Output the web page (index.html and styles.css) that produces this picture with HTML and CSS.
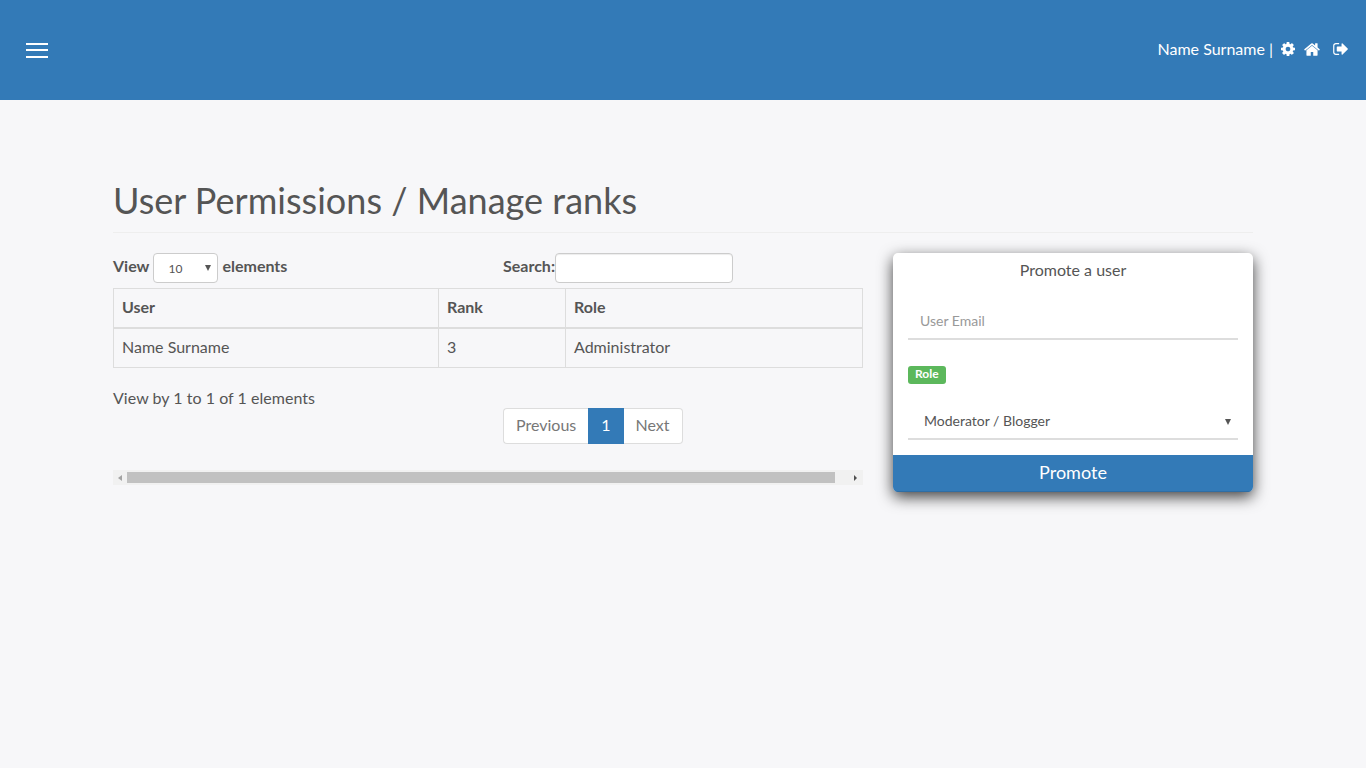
FILE: index.html
```html
<!DOCTYPE html>
<html lang="en">
<head>
<meta charset="utf-8">
<title>Manage ranks</title>
<link rel="stylesheet" href="styles.css">
</head>
<body>
<header class="topbar">
  <button class="burger" type="button" aria-label="Menu"><span></span><span></span><span></span></button>
  <div class="usernav">
    <span class="username">Name Surname |</span>
    <svg class="ico ico-cog" viewBox="0 0 1536 1536"><path transform="translate(-128 -128)" d="M1152 896q0-106-75-181t-181-75-181 75-75 181 75 181 181 75 181-75 75-181zm512-109v222q0 12-8 23t-20 13l-185 28q-19 54-39 91 35 50 107 138 10 12 10 25t-9 23q-27 37-99 108t-94 71q-12 0-26-9l-138-108q-44 23-91 38-16 136-29 186-7 28-36 28h-222q-14 0-24.500-8.500t-11.500-21.500l-28-184q-49-16-90-37l-141 107q-10 9-25 9-14 0-25-11-126-114-165-168-7-10-7-23 0-12 8-23 15-21 51-66.500t54-70.500q-27-50-41-99l-183-27q-13-2-21-12.500t-8-23.500v-222q0-12 8-23t19-13l186-28q14-46 39-92-40-57-107-138-10-12-10-24 0-10 9-23 26-36 98.500-107.500t94.500-71.500q13 0 26 10l138 107q44-23 91-38 16-136 29-186 7-28 36-28h222q14 0 24.500 8.500t11.500 21.500l28 184q49 16 90 37l142-107q9-9 24-9 13 0 25 10 129 119 165 170 7 8 7 22 0 12-8 23-15 21-51 66.500t-54 70.500q26 50 41 98l183 28q13 2 21 12.500t8 23.500z"/></svg>
    <svg class="ico ico-home" viewBox="96 224 1600 1344"><path d="M1472 992v480q0 26-19 45t-45 19h-384v-384h-256v384h-384q-26 0-45-19t-19-45v-480q0-1 .5-3t.5-3l575-474 575 474q1 2 1 6zm223-69l-62 74q-8 9-21 11h-3q-13 0-21-7l-692-577-692 577q-12 8-24 7-13-2-21-11l-62-74q-8-10-7-23.500t11-21.500l719-599q32-26 76-26t76 26l244 204v-195q0-14 9-23t23-9h192q14 0 23 9t9 23v408l219 182q10 8 11 21.500t-7 23.500z"/></svg>
    <svg class="ico ico-out" viewBox="64 256 1568 1280"><path d="M704 1440q0 4 1 20t.5 26.500-3 23.500-10 19.500-20.500 6.500h-320q-119 0-203.500-84.500t-84.500-203.500v-704q0-119 84.500-203.500t203.500-84.500h320q13 0 22.500 9.500t9.500 22.500q0 4 1 20t.5 26.500-3 23.500-10 19.500-20.500 6.500h-320q-66 0-113 47t-47 113v704q0 66 47 113t113 47h312l11.500 1 11.500 3 8 5.500 7 9 2 13.500zm928-544q0 26-19 45l-544 544q-19 19-45 19t-45-19-19-45v-288h-448q-26 0-45-19t-19-45v-384q0-26 19-45t45-19h448v-288q0-26 19-45t45-19 45 19l544 544q19 19 19 45z"/></svg>
  </div>
</header>

<main class="page">
  <h1 class="title">User Permissions / Manage ranks</h1>
  <div class="columns">
    <section class="listing">
      <div class="controls">
        <label class="control-view"><span>View</span>
          <span class="select-wrap len-wrap"><select class="len-select"><option>10</option></select></span>
          <span>elements</span></label>
        <label class="control-search">Search:<input class="search" type="text"></label>
      </div>
      <table class="grid">
        <thead>
          <tr><th class="c-user">User</th><th class="c-rank">Rank</th><th>Role</th></tr>
        </thead>
        <tbody>
          <tr><td>Name Surname</td><td>3</td><td>Administrator</td></tr>
        </tbody>
      </table>
      <div class="info">View by 1 to 1 of 1 elements</div>
      <nav class="pager">
        <a class="pg pg-first">Previous</a><a class="pg pg-on">1</a><a class="pg pg-last">Next</a>
      </nav>
      <div class="hscroll">
        <span class="arrow arrow-l"></span>
        <span class="thumb"></span>
        <span class="arrow arrow-r"></span>
      </div>
    </section>

    <aside class="card">
      <h2 class="card-title">Promote a user</h2>
      <div class="card-body">
        <input class="line-input" type="text" placeholder="User Email">
        <span class="badge">Role</span>
        <span class="select-wrap line-wrap"><select class="line-select"><option>Moderator / Blogger</option></select></span>
      </div>
      <button class="promote" type="button">Promote</button>
    </aside>
  </div>
</main>
</body>
</html>
```

FILE: styles.css
```css
* { box-sizing: border-box; }

html, body { margin: 0; height: 100%; }

body {
  background: #f7f7f9;
  color: #555;
  font-family: Lato, "Liberation Sans", sans-serif;
  font-size: 16px;
  line-height: 1.42857;
}

.topbar {
  height: 100px;
  background: #337ab7;
  color: #fff;
  display: flex;
  align-items: center;
  justify-content: space-between;
  padding: 0 18px 0 26px;
}

.burger {
  width: 22px;
  height: 15px;
  padding: 0;
  border: 0;
  background: none;
  display: flex;
  flex-direction: column;
  justify-content: space-between;
}

.burger span { display: block; height: 2px; background: #fff; }

.usernav { display: flex; align-items: center; margin-top: -2px; }

.username { margin-right: 8px; }

.ico { fill: #fff; display: block; }
.ico-cog { width: 14px; height: 14px; margin-right: 9px; }
.ico-home { width: 16px; height: 13px; margin-right: 13px; }
.ico-out { width: 15px; height: 12px; }

.page { width: 1140px; margin: 0 auto; padding-top: 78px; }

.title {
  margin: 0 0 20px;
  padding-bottom: 10px;
  border-bottom: 1px solid #eee;
  font-size: 36px;
  font-weight: 400;
  line-height: 44px;
  letter-spacing: .02px;
}

.columns { display: flex; justify-content: space-between; align-items: flex-start; }

.listing { width: 750px; }

.controls { display: flex; height: 35px; font-weight: 700; }

.control-view { width: 390px; display: flex; align-items: flex-start; gap: 4px; line-height: 26px; }

.control-search { display: flex; align-items: flex-start; line-height: 26px; }

.select-wrap { position: relative; display: block; }

.select-wrap::after {
  content: "";
  position: absolute;
  top: 50%;
  border-left: 3px solid transparent;
  border-right: 3px solid transparent;
  border-top: 6px solid #555;
  pointer-events: none;
}

.len-wrap { width: 65px; height: 30px; }
.len-wrap::after { right: 7px; margin-top: -3px; }

.line-wrap { width: 100%; margin-top: 16px; }
.line-wrap::after { right: 7px; margin-top: -1px; }

.len-select {
  display: block;
  width: 65px;
  height: 30px;
  padding: 0 0 0 14px;
  border: 1px solid #ccc;
  border-radius: 4px;
  background-color: #fff;
  color: #555;
  font-family: Lato, sans-serif;
  font-size: 12px;
  appearance: none;
}

.search {
  width: 178px;
  height: 30px;
  padding: 0 8px;
  border: 1px solid #ccc;
  border-radius: 4px;
  background: #fff;
  box-shadow: inset 0 1px 1px rgba(0, 0, 0, .075);
}

.grid { width: 750px; border-collapse: collapse; table-layout: fixed; }

.grid th, .grid td {
  border: 1px solid #ddd;
  padding: 0 8px;
  text-align: left;
  line-height: 22px;
}

.grid td { height: 40px; padding-bottom: 2px; }
.grid th { border-bottom-width: 2px; height: 39px; padding-bottom: 1px; }

.c-user { width: 325px; }
.c-rank { width: 127px; }

.info { margin-top: 19px; height: 21px; line-height: 22px; letter-spacing: .03px; }

.pager { display: flex; margin: 0 0 26px 390px; height: 36px; }

.pg {
  display: block;
  height: 36px;
  padding: 0 12px;
  border: 1px solid #ddd;
  background: #fff;
  color: #777;
  line-height: 32px;
}

.pg-first { border-radius: 4px 0 0 4px; border-right: 0; }
.pg-last { border-radius: 0 4px 4px 0; border-left: 0; }
.pg-on { background: #337ab7; border-color: #337ab7; color: #fff; }

.hscroll {
  height: 15px;
  background: #f1f1f1;
  display: flex;
  align-items: center;
}

.thumb { width: 708px; height: 11px; background: #c1c1c1; }

.arrow { width: 14px; height: 15px; display: flex; align-items: center; justify-content: center; }
.arrow-l { justify-content: flex-start; padding-left: 5px; }
.arrow-r { flex: 1; justify-content: flex-end; padding-right: 6px; }

.arrow::before {
  content: "";
  border-top: 3.5px solid transparent;
  border-bottom: 3.5px solid transparent;
}
.arrow-l::before { border-right: 4px solid #a3a3a3; }
.arrow-r::before { border-left: 3px solid #505050; }

.card {
  width: 360px;
  height: 239px;
  background: #fff;
  border-radius: 5px;
  box-shadow: 0 5px 15px rgba(0, 0, 0, .75);
  display: flex;
  flex-direction: column;
  overflow: hidden;
}

.card-title {
  margin: 0;
  padding-top: 5px;
  font-size: 16px;
  font-weight: 400;
  line-height: 23px;
  text-align: center;
}

.card-body {
  flex: 1;
  padding: 0 15px;
  display: flex;
  flex-direction: column;
  align-items: flex-start;
}

.line-input {
  width: 100%;
  height: 39px;
  margin-top: 20px;
  padding: 2px 12px 0;
  border: 0;
  border-bottom: 2px solid #ddd;
  background: transparent;
  font-family: Lato, sans-serif;
  font-size: 14px;
  color: #555;
}

.line-input::placeholder { color: #999; opacity: 1; }

.badge {
  margin-top: 26px;
  height: 18px;
  padding: 0 7px;
  border-radius: 3px;
  background: #5cb85c;
  color: #fff;
  font-size: 12px;
  font-weight: 700;
  line-height: 16px;
}

.line-select {
  display: block;
  width: 100%;
  height: 40px;
  padding: 2px 16px 0;
  border: 0;
  border-bottom: 2px solid #ddd;
  background-color: #fff;
  color: #555;
  font-family: Lato, sans-serif;
  font-size: 14px;
  appearance: none;
}

.promote {
  height: 37px;
  padding: 0 0 2px;
  border: 0;
  border-bottom: 1px solid #2e6da4;
  background: #337ab7;
  color: #fff;
  font-family: Lato, sans-serif;
  font-size: 18px;
}
```
